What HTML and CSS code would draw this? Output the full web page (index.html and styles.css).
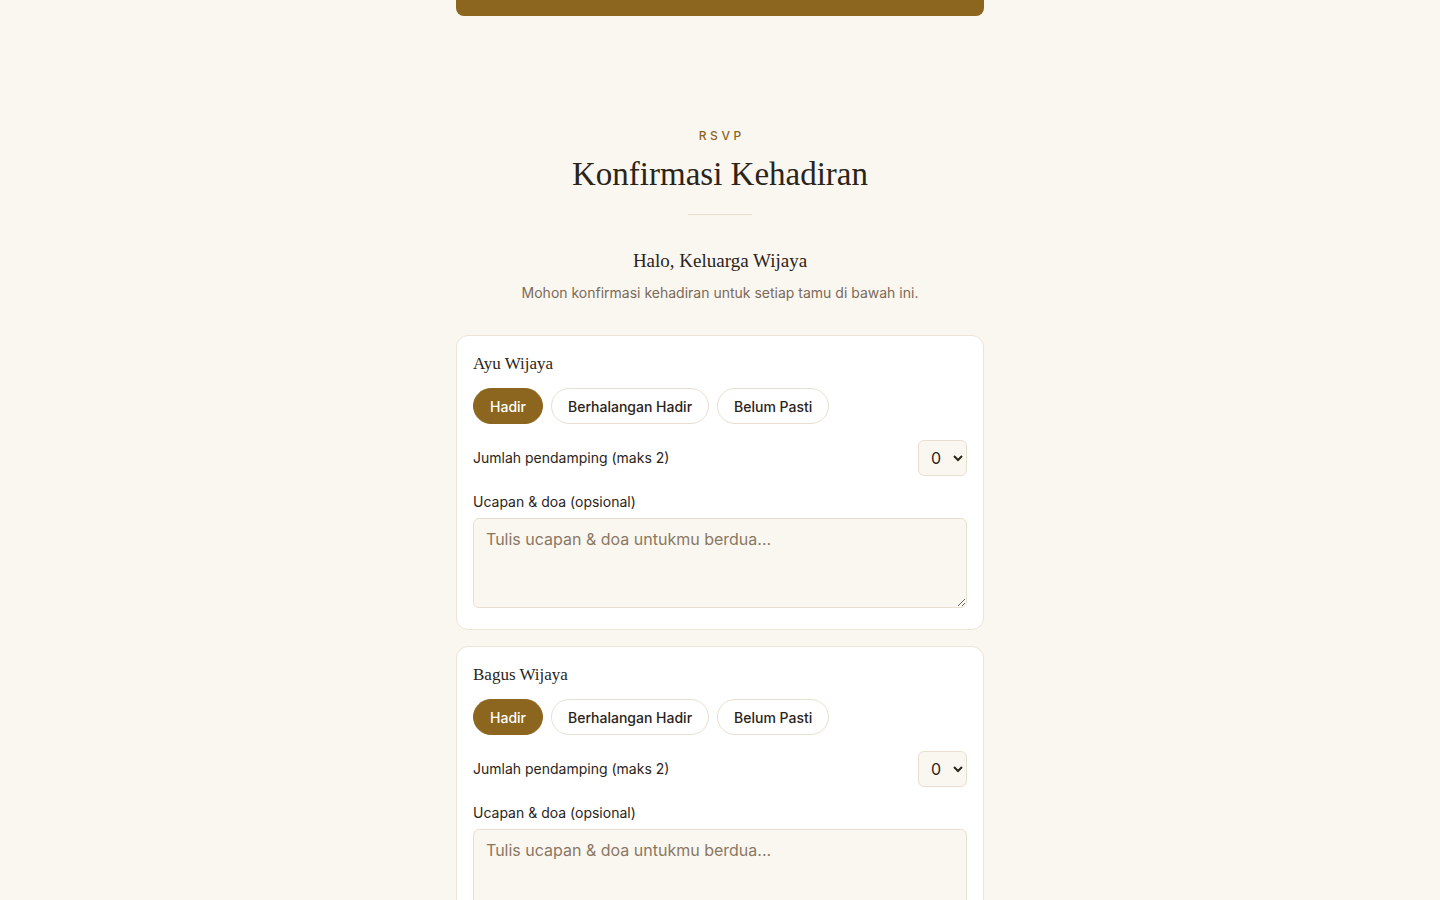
FILE: index.html
```html
<!DOCTYPE html>
<html lang="id">
<head>
<meta charset="utf-8">
<title>RSVP - Konfirmasi Kehadiran</title>
<link rel="stylesheet" href="styles.css">
</head>
<body>
<div class="page">
  <div class="prev">
    <button class="cta" type="button">Simpan ke Kalender</button>
  </div>

  <section class="rsvp">
    <header class="head">
      <div class="eyebrow">RSVP</div>
      <h2 class="title">Konfirmasi Kehadiran</h2>
      <div class="divider"></div>
      <h3 class="greet">Halo, Keluarga Wijaya</h3>
      <p class="sub">Mohon konfirmasi kehadiran untuk setiap tamu di bawah ini.</p>
    </header>

    <div class="cards">
      <div class="card">
        <div class="name">Ayu Wijaya</div>
        <div class="choices">
          <button class="pill active" type="button">Hadir</button>
          <button class="pill" type="button">Berhalangan Hadir</button>
          <button class="pill" type="button">Belum Pasti</button>
        </div>
        <div class="row">
          <label class="lbl">Jumlah pendamping (maks 2)</label>
          <select class="sel"><option>0</option><option>1</option><option>2</option></select>
        </div>
        <label class="lbl msg-lbl">Ucapan &amp; doa (opsional)</label>
        <textarea class="msg" placeholder="Tulis ucapan &amp; doa untukmu berdua..."></textarea>
      </div>

      <div class="card">
        <div class="name">Bagus Wijaya</div>
        <div class="choices">
          <button class="pill active" type="button">Hadir</button>
          <button class="pill" type="button">Berhalangan Hadir</button>
          <button class="pill" type="button">Belum Pasti</button>
        </div>
        <div class="row">
          <label class="lbl">Jumlah pendamping (maks 2)</label>
          <select class="sel"><option>0</option><option>1</option><option>2</option></select>
        </div>
        <label class="lbl msg-lbl">Ucapan &amp; doa (opsional)</label>
        <textarea class="msg" placeholder="Tulis ucapan &amp; doa untukmu berdua..."></textarea>
      </div>
    </div>
  </section>
</div>
</body>
</html>
```

FILE: styles.css
```css
* { box-sizing: border-box; }
html, body { margin: 0; padding: 0; }
body {
  background: #faf7f1;
  font-family: Inter, "Noto Sans", sans-serif;
  color: #2b2419;
  overflow: hidden;
}
.page {
  width: 528px;
  margin: 0 auto;
}
.prev {
  margin-top: -32px;
}
.cta {
  display: block;
  width: 100%;
  height: 48px;
  border: none;
  border-radius: 8px;
  background: #8c651e;
  color: #fff;
  font-family: Inter, sans-serif;
  font-size: 15px;
  font-weight: 600;
  padding: 0 0 22px;
}
.rsvp {
  padding-top: 112px;
}
.head {
  text-align: center;
}
.eyebrow {
  font-size: 12px;
  line-height: 16px;
  letter-spacing: 0.3em;
  padding-left: 0.3em;
  color: #8c651e;
  font-weight: 500;
}
.title {
  margin: 10px 0 0;
  font-family: "Liberation Serif", "Times New Roman", serif;
  font-weight: 400;
  font-size: 33px;
  line-height: 40px;
  color: #2b2419;
}
.divider {
  width: 64px;
  height: 1px;
  background: #e6dccb;
  margin: 20px auto 0;
}
.greet {
  margin: 32px 0 0;
  font-family: "Liberation Serif", "Times New Roman", serif;
  font-weight: 400;
  font-size: 19px;
  line-height: 28px;
  color: #2b2419;
}
.sub {
  margin: 8px 0 0;
  font-size: 14px;
  line-height: 20px;
  color: #7a6a58;
}
.cards {
  margin-top: 32px;
  display: flex;
  flex-direction: column;
  gap: 16px;
}
.card {
  background: #fff;
  border: 1px solid #ece4d6;
  border-radius: 12px;
  padding: 16px 16px 21px;
  display: flex;
  flex-direction: column;
}
.name {
  font-family: "Liberation Serif", "Times New Roman", serif;
  font-size: 17px;
  line-height: 24px;
  color: #2b2419;
}
.choices {
  margin-top: 12px;
  display: flex;
  gap: 8px;
}
.pill {
  height: 36px;
  padding: 0 16px;
  border-radius: 999px;
  border: 1px solid #e8dfd0;
  background: #fff;
  color: #2b2419;
  font-family: Inter, sans-serif;
  font-size: 14px;
  font-weight: 500;
}
.pill.active {
  background: #8c651e;
  border-color: #8c651e;
  color: #fff;
}
.row {
  margin-top: 16px;
  display: flex;
  align-items: center;
  justify-content: space-between;
}
.lbl {
  font-size: 14px;
  line-height: 20px;
  color: #2b2419;
}
.sel {
  height: 36px;
  width: 49px;
  padding: 0 6px 0 8px;
  border: 1px solid #e8dfd0;
  border-radius: 6px;
  background: #faf7f1;
  color: #2b2419;
  font-family: Inter, sans-serif;
  font-size: 16px;
}
.msg-lbl {
  margin-top: 16px;
  display: block;
}
.msg {
  margin-top: 6px;
  display: block;
  width: 100%;
  height: 90px;
  padding: 10px 12px;
  border: 1px solid #e8dfd0;
  border-radius: 6px;
  background: #faf7f1;
  font-family: Inter, sans-serif;
  font-size: 16px;
  line-height: 20px;
  color: #2b2419;
  resize: vertical;
}
.msg::placeholder {
  color: #8a7763;
}
```
